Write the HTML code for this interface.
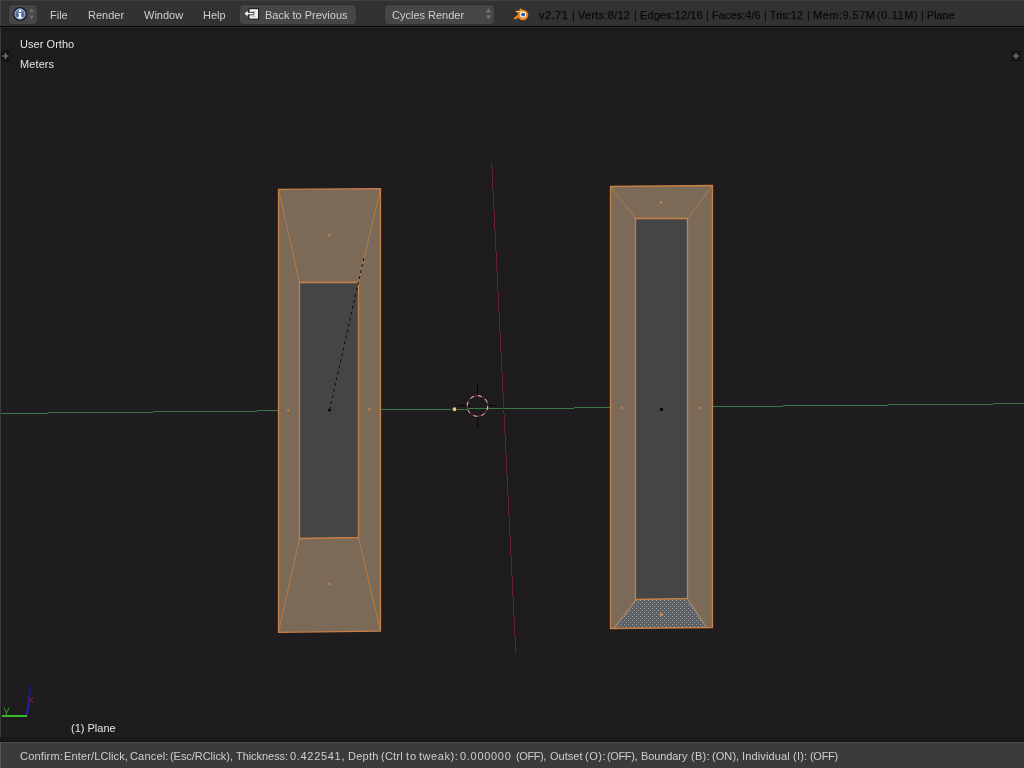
<!DOCTYPE html>
<html>
<head>
<meta charset="utf-8">
<title>Blender</title>
<style>
html,body{margin:0;padding:0;}
body{width:1024px;height:768px;overflow:hidden;background:#1e1c1f;font-family:"Liberation Sans",sans-serif;position:relative;}
.abs{position:absolute;}
#header{left:0;top:0;width:1024px;height:26px;background:#323232;border-top:1px solid #404040;box-sizing:border-box;}
#hline{left:0;top:26px;width:1024px;height:1px;background:#050505;}
#hline2{left:0;top:27px;width:1024px;height:1px;background:#2a2a2b;}
#hshadow{left:0;top:28px;width:1024px;height:4px;background:linear-gradient(#1a191b,#1e1c1f);}
.btn{position:absolute;top:5px;height:19px;background:#464646;border-radius:4px;box-shadow:0 0 0 1px rgba(40,40,40,0.35);}
.t{position:absolute;will-change:transform;white-space:nowrap;font-size:11px;line-height:13px;color:#cecece;transform-origin:0 0;}
.menu{top:9px;}
.stat{color:#0a0a0a;-webkit-text-stroke:0.25px #0a0a0a;}
#vp{left:0;top:28px;width:1024px;height:714px;}
#leftedge{left:0;top:28px;width:1px;height:714px;background:#3c3a3d;}
#leftedge0{left:0;top:1px;width:1px;height:25px;background:#464646;}
#leftedge2{left:0;top:742px;width:1px;height:26px;background:#585858;}
#footer{left:0;top:742px;width:1024px;height:26px;background:#3b3b3b;}
#fband{left:0;top:737px;width:1024px;height:5px;background:linear-gradient(#1a1a1a,#191919 70%,#101010);}
#footline{left:0;top:742px;width:1024px;height:1px;background:#4c4c4c;}
.vt{color:#e4e4e4;}
</style>
</head>
<body>
<div id="header" class="abs"></div>
<div id="hline" class="abs"></div>
<div id="hline2" class="abs"></div>
<div id="hshadow" class="abs"></div>

<!-- header widgets -->
<div class="btn" style="left:9px;width:28px;"></div>
<div class="t menu" id="m_file" style="left:50px;">File</div>
<div class="t menu" id="m_render" style="left:88px;">Render</div>
<div class="t menu" id="m_window" style="left:144px;">Window</div>
<div class="t menu" id="m_help" style="left:203px;">Help</div>
<div class="btn" style="left:240px;width:116px;"></div>
<div class="t menu" id="m_back" style="left:265px;">Back to Previous</div>
<div class="btn" style="left:385px;width:109px;"></div>
<div class="t menu" id="m_cycles" style="left:392px;">Cycles Render</div>
<!--STAT-->
<div class="t stat" style="left:539.32px;top:9px;letter-spacing:0.468px;">v2.71</div>
<div class="t stat" style="left:571.69px;top:9px;letter-spacing:0.000px;">|</div>
<div class="t stat" style="left:578.05px;top:9px;letter-spacing:0.270px;">Verts:8/12</div>
<div class="t stat" style="left:634.19px;top:9px;letter-spacing:0.000px;">|</div>
<div class="t stat" style="left:639.75px;top:9px;letter-spacing:0.086px;">Edges:12/16</div>
<div class="t stat" style="left:706.09px;top:9px;letter-spacing:0.000px;">|</div>
<div class="t stat" style="left:711.70px;top:9px;letter-spacing:0.047px;">Faces:4/6</div>
<div class="t stat" style="left:764.29px;top:9px;letter-spacing:0.000px;">|</div>
<div class="t stat" style="left:769.87px;top:9px;letter-spacing:-0.076px;">Tris:12</div>
<div class="t stat" style="left:806.79px;top:9px;letter-spacing:0.000px;">|</div>
<div class="t stat" style="left:812.60px;top:9px;letter-spacing:0.484px;">Mem:9.57M</div>
<div class="t stat" style="left:877.34px;top:9px;letter-spacing:0.598px;">(0.11M)</div>
<div class="t stat" style="left:921.39px;top:9px;letter-spacing:0.000px;">|</div>
<div class="t stat" style="left:927.00px;top:9px;letter-spacing:-0.144px;">Plane</div>
<!--/STAT-->


<svg id="hicons" class="abs" style="left:0;top:0;" width="1024" height="28" viewBox="0 0 1024 28">
<!-- info icon -->
<linearGradient id="ig" x1="0" y1="8" x2="0" y2="20" gradientUnits="userSpaceOnUse"><stop offset="0" stop-color="#7d95bb"/><stop offset="0.55" stop-color="#4d679a"/><stop offset="1" stop-color="#6a86b4"/></linearGradient>
<circle cx="20" cy="14" r="6.3" fill="url(#ig)" stroke="#0e1628" stroke-width="1.2"/>
<circle cx="20" cy="14" r="5" fill="none" stroke="#a9b8d0" stroke-width="0.9"/>
<rect x="19" y="10" width="2.2" height="2" fill="#ffffff"/>
<path d="M18.3 13 h2.9 v4 h1 v1.2 h-4.4 v-1.2 h1.1 v-2.8 h-0.6 z" fill="#ffffff"/>
<!-- info updown arrows -->
<path d="M31.5 8.3 l2.6 4 h-5.2 z M31.5 19.6 l2.6 -4.2 h-5.2 z" fill="#6b6b6b"/>
<!-- back to previous icon -->
<rect x="249" y="8.7" width="9.6" height="10.4" fill="#f2f2f2" stroke="#111111" stroke-width="1"/>
<path d="M251.5 11.5 h4.5 M251.5 16.5 h4.5" stroke="#c8c8c8" stroke-width="1"/>
<path d="M244 13.6 l4 -3.8 v2.6 h6 v2.4 h-6 v2.6 z" fill="#f4f4f4" stroke="#222222" stroke-width="0.8" stroke-linejoin="round"/>
<!-- cycles dropdown arrows -->
<path d="M488.5 8.2 l2.7 4.2 h-5.4 z M488.5 19.5 l2.7 -4.3 h-5.4 z" fill="#727272"/>
<!-- blender logo -->
<g id="blogo">
<path d="M514.1 17.7 L520.6 12.4 H516.6 a0.85 0.85 0 0 1 0 -1.7 H520.4 L519.7 10 a0.9 0.9 0 0 1 1.1 -1.4 L526.3 12.6 L518 18.2 L515.3 19.2 a0.9 0.9 0 0 1 -1.2 -1.5 z" fill="#e4861c"/>
<ellipse cx="523" cy="15" rx="5.3" ry="5.2" fill="#e68a1e"/>
<path d="M516.3 10.9 h5.6 v1.1 h-5.6 z" fill="#f2cf9a"/>
<circle cx="523" cy="14.6" r="3.15" fill="#fbf6ee"/>
<circle cx="523.1" cy="14.6" r="1.95" fill="#2b56a6"/>
</g>
</svg>

<!-- viewport -->
<svg id="vp" class="abs" width="1024" height="714" viewBox="0 28 1024 714">
<defs>
<pattern id="stip" x="0" y="0" width="4" height="4" patternUnits="userSpaceOnUse">
<rect x="0" y="0" width="4" height="4" fill="#5b5f66"/>
<rect x="0" y="0" width="1" height="1" fill="#a2a2a0"/>
<rect x="2" y="2" width="1" height="1" fill="#a2a2a0"/>
</pattern>
</defs>
<!-- axis lines -->
<line x1="0" y1="413.457" x2="1024" y2="403.718" stroke="#3c7844" stroke-width="1" shape-rendering="crispEdges"/>
<line x1="491.74" y1="163.75" x2="515.76" y2="652.5" stroke="#68222d" stroke-width="1" shape-rendering="crispEdges"/>

<!-- left object -->
<g id="objL">
<polygon points="278.5,189.4 380.5,188.6 380.5,631.1 278.5,632.3" fill="#7c6a58"/>
<polygon points="299.5,282.5 358.5,282.5 358.5,537.5 299.5,538.5" fill="#454545"/>
<g fill="none" stroke="#c98044" stroke-width="1.3">
<polygon points="278.5,189.4 380.5,188.6 380.5,631.1 278.5,632.3"/>
<polygon points="299.5,282.5 358.5,282.5 358.5,537.5 299.5,538.5"/>
</g>
<g fill="none" stroke="#b07c4c" stroke-width="1">
<line x1="278.5" y1="189.5" x2="299.5" y2="282.5"/>
<line x1="380.5" y1="188.5" x2="358.5" y2="282.5"/>
<line x1="278.5" y1="632.3" x2="299.5" y2="538.5"/>
<line x1="380.5" y1="631.1" x2="358.5" y2="537.5"/>
</g>
</g>

<!-- right object -->
<g id="objR">
<polygon points="610.5,186.5 712.5,185.5 712.5,627.5 610.5,628.5" fill="#7c6a58"/>
<polygon points="635.5,218.5 687.5,218.5 687.5,598.5 635.5,599.5" fill="#454545"/>
<polygon points="636,600 687.5,599 706.5,627.5 614,628.5" fill="url(#stip)"/>
<path d="M636,600 L614,628.5 M687.5,599 L706.5,627.5" stroke="#9a8468" stroke-width="1.6" fill="none"/>
<g fill="none" stroke="#c98044" stroke-width="1.3">
<polygon points="610.5,186.5 712.5,185.5 712.5,627.5 610.5,628.5"/>
<polygon points="635.5,218.5 687.5,218.5 687.5,598.5 635.5,599.5"/>
</g>
<g fill="none" stroke="#b07c4c" stroke-width="1">
<line x1="610.5" y1="186.5" x2="635.5" y2="218.5"/>
<line x1="712.5" y1="185.5" x2="687.5" y2="218.5"/>
</g>
</g>

<!-- dashed help line -->
<line x1="363.9" y1="258.2" x2="330" y2="408" stroke="#0a0a0a" stroke-width="1" stroke-dasharray="3 3.1"/>
<!-- object centers -->
<circle cx="329.5" cy="410" r="1.6" fill="#050505"/>
<rect x="660" y="408" width="3" height="3" fill="#050505"/>
<!-- face dots -->
<g fill="#c08248">
<circle cx="329.3" cy="235.3" r="1.25"/>
<circle cx="329.3" cy="583.8" r="1.25"/>
<circle cx="288.2" cy="410.5" r="1.25"/>
<circle cx="369.2" cy="409.5" r="1.25"/>
<circle cx="661" cy="202.4" r="1.25"/>
<rect x="660" y="613" width="3" height="3" fill="#c08a58"/>
<circle cx="621.8" cy="407.8" r="1.25"/>
<circle cx="700.1" cy="407.8" r="1.25"/>
</g>
<!-- origin dot -->
<circle cx="454.5" cy="409.2" r="2.5" fill="#e6c48c" stroke="#1a0d05" stroke-width="1"/>
<!-- 3d cursor -->
<g id="cursor">
<path d="M477.5 384 v13.5 M477.5 416 v11 M458 405.5 h12.5 M487 405.5 h10" stroke="#060606" stroke-width="1"/>
<circle cx="477.5" cy="406" r="10.3" fill="none" stroke="#8c2036" stroke-width="1"/>
<circle cx="477.5" cy="406" r="10.3" fill="none" stroke="#dcd4d4" stroke-width="1" stroke-dasharray="4.04 4.05"/>
</g>
<!-- plus icons -->
<g>
<circle cx="5.5" cy="56" r="6" fill="#161516"/>
<path d="M2.5 56 h6 M5.5 53 v6" stroke="#707070" stroke-width="1.6"/>
<circle cx="1016" cy="56" r="6" fill="#161516"/>
<path d="M1013 56 h6 M1016 53 v6" stroke="#707070" stroke-width="1.6"/>
</g>
<!-- mini axis -->
<g id="miniaxis">
<linearGradient id="bz" x1="0" y1="716" x2="0" y2="684" gradientUnits="userSpaceOnUse"><stop offset="0" stop-color="#2a22b4"/><stop offset="0.55" stop-color="#201c8c"/><stop offset="1" stop-color="#17164a"/></linearGradient>
<path d="M26.8 716 L31 684" stroke="url(#bz)" stroke-width="2.2"/>
<path d="M2 716 h25" stroke="#3ab830" stroke-width="2"/>
<path d="M4 707.5 l2.4 5.5 M9 707.5 l-3.3 7.8" stroke="#3c9a34" stroke-width="1" fill="none"/>
<path d="M28.5 697 l5 6 M33.5 697 l-5 6" stroke="#7c2020" stroke-width="1" fill="none"/>
</g>
</svg>
<div id="leftedge" class="abs"></div>
<div id="leftedge0" class="abs"></div>

<div class="t vt" id="v_user" style="left:20px;top:38px;letter-spacing:0.05px;">User Ortho</div>
<div class="t vt" id="v_meters" style="left:20px;top:58px;letter-spacing:0.1px;">Meters</div>
<div class="t vt" id="v_plane" style="left:70.5px;top:722px;">(1) Plane</div>

<!-- footer -->
<div id="fband" class="abs"></div>
<div id="footer" class="abs"></div>
<div id="footline" class="abs"></div>
<div id="leftedge2" class="abs"></div>
<!--FOOT-->
<div class="t ft" style="left:19.55px;top:750px;letter-spacing:0.186px;">Confirm:</div>
<div class="t ft" style="left:63.50px;top:750px;letter-spacing:0.130px;">Enter/LClick,</div>
<div class="t ft" style="left:130.05px;top:750px;letter-spacing:0.177px;">Cancel:</div>
<div class="t ft" style="left:169.94px;top:750px;letter-spacing:-0.048px;">(Esc/RClick),</div>
<div class="t ft" style="left:235.72px;top:750px;letter-spacing:-0.055px;">Thickness:</div>
<div class="t ft" style="left:290.07px;top:750px;letter-spacing:0.689px;">0.422541,</div>
<div class="t ft" style="left:347.74px;top:750px;letter-spacing:0.255px;">Depth</div>
<div class="t ft" style="left:381.24px;top:750px;letter-spacing:0.227px;">(Ctrl</div>
<div class="t ft" style="left:405.96px;top:750px;letter-spacing:1.004px;">to</div>
<div class="t ft" style="left:419.11px;top:750px;letter-spacing:0.552px;">tweak):</div>
<div class="t ft" style="left:460.32px;top:750px;letter-spacing:0.702px;">0.000000</div>
<div class="t ft" style="left:515.74px;top:750px;letter-spacing:-0.408px;">(OFF),</div>
<div class="t ft" style="left:549.50px;top:750px;letter-spacing:0.028px;">Outset</div>
<div class="t ft" style="left:584.94px;top:750px;letter-spacing:0.509px;">(O):</div>
<div class="t ft" style="left:607.44px;top:750px;letter-spacing:-0.377px;">(OFF),</div>
<div class="t ft" style="left:641.00px;top:750px;letter-spacing:-0.094px;">Boundary</div>
<div class="t ft" style="left:691.34px;top:750px;letter-spacing:0.284px;">(B):</div>
<div class="t ft" style="left:711.94px;top:750px;letter-spacing:0.073px;">(ON),</div>
<div class="t ft" style="left:741.99px;top:750px;letter-spacing:0.139px;">Individual</div>
<div class="t ft" style="left:793.24px;top:750px;letter-spacing:0.228px;">(I):</div>
<div class="t ft" style="left:810.09px;top:750px;letter-spacing:-0.297px;">(OFF)</div>
<!--/FOOT-->
</body>
</html>
